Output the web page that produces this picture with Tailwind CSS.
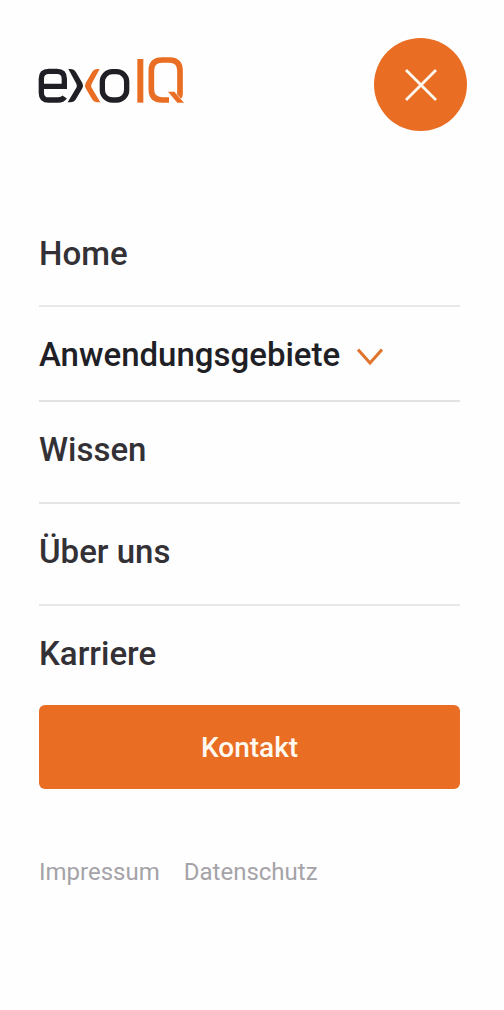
<!DOCTYPE html>
<html lang="de">
<head>
<meta charset="utf-8">
<meta name="viewport" content="width=device-width, initial-scale=1">
<title>exoIQ</title>
<script src="https://cdn.jsdelivr.net/npm/@tailwindcss/browser@4"></script>
</head>
<body class="min-h-screen bg-[#fefefe] font-['Roboto','Liberation_Sans',sans-serif] text-[#333136]">
<header class="flex items-start justify-between pt-[38px] pr-[37px] pl-[38px]">
  <a href="#" aria-label="exoIQ" class="mt-[18px] block">
    <svg class="h-12 w-[146px]" viewBox="24 30 438 144" fill="none" stroke-width="16" aria-hidden="true">
      <g stroke="#211f26">
        <path d="M34 121H103V98Q103 76 81 76H56Q34 76 34 98V140Q34 162 56 162H84Q98 162 104 153"/>
        <rect x="217" y="77" width="73" height="85" rx="30"/>
      </g>
      <path fill="#211f26" d="M115 69H121Q132 69 138 79L157 111Q161 119 157 127L138 159Q132 169 121 169H113L139 125Q142 119 139 113Z"/>
      <path fill="#e96d23" d="M209 69H203Q192 69 186 79L167 111Q163 119 167 127L186 159Q192 169 203 169H211L185 125Q182 119 185 113Z"/>
      <g stroke="#e96d23">
        <path d="M331 39V170" stroke-width="18"/>
        <path d="M417 162H396Q364 162 364 130V74Q364 42 396 42H418Q450 42 450 74V146" stroke-width="17"/>
      </g>
      <path fill="#e96d23" d="M414 137H433L462 170H442Z"/>
      <path fill="#e96d23" d="M441.500 145H458.500Q458 152 455 157H452Z"/>
    </svg>
  </a>
  <button type="button" aria-label="Menü schließen" class="flex size-[93px] items-center justify-center rounded-full bg-[#e96d23]">
    <svg class="size-8" viewBox="0 0 32 32" fill="none" stroke="#fff8f0" stroke-width="2.8" aria-hidden="true"><path d="M1 1L31 31M31 1L1 31"/></svg>
  </button>
</header>
<main class="pt-[75px] pr-11 pl-[39px]">
  <nav aria-label="Hauptmenü" class="text-[33px] leading-10 font-medium">
    <ul>
      <li class="border-b-2 border-[#e8e7ea] pt-7 pb-[31px]"><a href="#">Home</a></li>
      <li class="border-b-2 border-[#e2e1e4] pt-7 pb-[25px] text-[#211f26]">
        <button type="button" aria-expanded="false" class="flex items-center gap-[17px]">Anwendungsgebiete
          <svg class="mt-1 h-[18px] w-[26px]" viewBox="0 0 26 18" fill="none" stroke="#e0742d" stroke-width="3" aria-hidden="true"><path d="M1 1.5L13 15L25 1.5"/></svg>
        </button>
      </li>
      <li class="border-b-2 border-[#e5e4e7] pt-7 pb-8"><a href="#">Wissen</a></li>
      <li class="border-b-2 border-[#e8e7ea] pt-7 pb-8"><a href="#">Über uns</a></li>
      <li class="pt-7 pb-[31px]"><a href="#">Karriere</a></li>
    </ul>
  </nav>
  <a href="#" class="flex h-[84px] items-center justify-center rounded-md bg-[#e96d23] pt-[2px] text-[28px] font-medium text-[#fff8f0]">Kontakt</a>
  <footer class="flex gap-6 pt-[67px] text-[24px] leading-8 text-[#a5a3a8]">
    <a href="#">Impressum</a>
    <a href="#">Datenschutz</a>
  </footer>
</main>
</body>
</html>
